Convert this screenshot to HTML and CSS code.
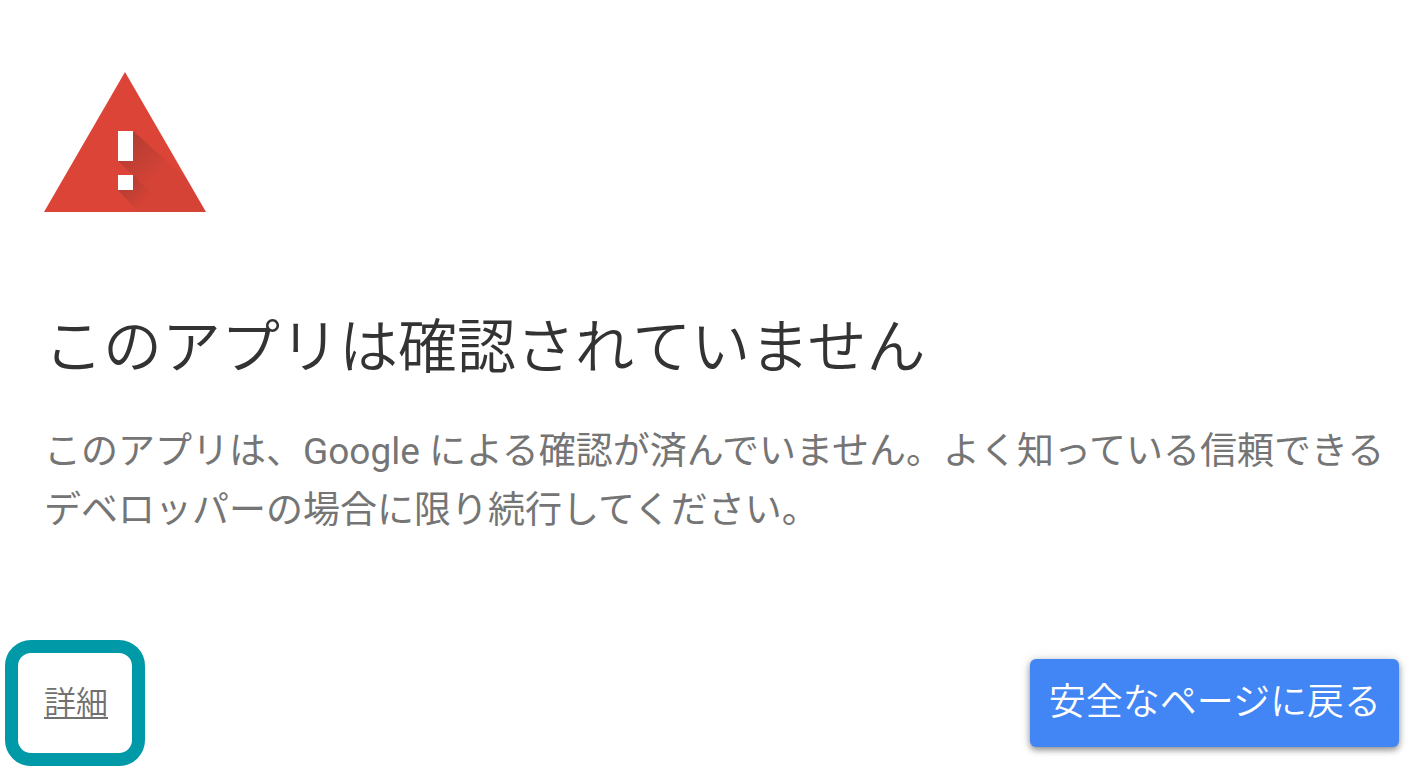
FILE: index.html
```html
<!DOCTYPE html>
<html lang="ja">
<head>
<meta charset="utf-8">
<title>このアプリは確認されていません</title>
<link rel="stylesheet" href="styles.css">
</head>
<body>
<main class="page">
  <svg class="warning" viewBox="0 0 162 140" aria-hidden="true">
    <defs>
      <linearGradient id="shade-bar" gradientUnits="userSpaceOnUse" x1="82" y1="74" x2="112" y2="104">
        <stop offset="0" stop-color="#3e2723" stop-opacity=".24"/>
        <stop offset="1" stop-color="#3e2723" stop-opacity=".04"/>
      </linearGradient>
      <linearGradient id="shade-dot" gradientUnits="userSpaceOnUse" x1="82" y1="111" x2="100" y2="129">
        <stop offset="0" stop-color="#3e2723" stop-opacity=".24"/>
        <stop offset="1" stop-color="#3e2723" stop-opacity=".04"/>
      </linearGradient>
    </defs>
    <path fill="#db4437" d="M81 0 162 140H0z"/>
    <path fill="url(#shade-bar)" d="M89 59 143 107 162 140H126L89 103 74 89z"/>
    <path fill="url(#shade-dot)" d="M89 103 126 140H94L74 118z"/>
    <path fill="#fff" d="M74 59h15v30H74zM74 103h15v15H74z"/>
  </svg>
  <h1 class="title">このアプリは確認されていません</h1>
  <p class="message">このアプリは、Google による確認が済んでいません。よく知っている信頼できるデベロッパーの場合に限り続行してください。</p>
  <div class="actions">
    <div class="highlight"><a class="details" href="#">詳細</a></div>
    <button class="back" type="button">安全なページに戻る</button>
  </div>
</main>
</body>
</html>
```
FILE: styles.css
```css
* { box-sizing: border-box; }
body {
  margin: 0;
  background: #fff;
  font-family: Roboto, "Noto Sans CJK JP", sans-serif;
  font-weight: 350;
}
.page { padding: 72px 21px 4px 44px; }
.warning { display: block; width: 162px; height: 140px; }
.title {
  margin: 94px 0 0;
  color: #333;
  font-size: 59px;
  font-weight: 350;
  line-height: 84px;
}
.message {
  margin: 32px -4px 0 0;
  color: #757575;
  font-size: 37px;
  font-weight: 400;
  line-height: 59px;
}
.actions {
  display: flex;
  align-items: center;
  justify-content: space-between;
  margin-top: 100px;
  margin-left: -39px;
}
.highlight {
  padding: 26px 24px 26px 26px;
  border: 13px solid #0099a8;
  border-radius: 26px;
}
.details {
  color: #707070;
  font-size: 32px;
  line-height: 48px;
  text-decoration-thickness: 2px;
  text-decoration-skip-ink: none;
  text-underline-offset: 3px;
}
.back {
  padding: 16px 18px 16px 19px;
  border: 0;
  border-radius: 6px;
  background: #4285f4;
  box-shadow: 0 3px 6px rgba(0, 0, 0, .4), 0 0 12px rgba(0, 0, 0, .12);
  color: #fff;
  font: inherit;
  font-size: 37px;
  line-height: 56px;
}
```
